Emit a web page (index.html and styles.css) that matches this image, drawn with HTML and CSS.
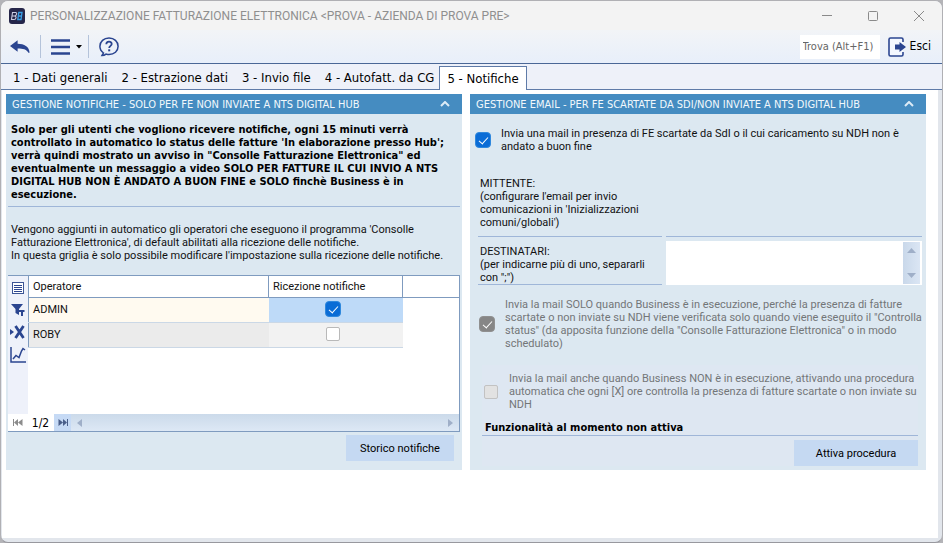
FILE: index.html
```html
<!DOCTYPE html>
<html lang="it">
<head>
<meta charset="utf-8">
<title>Personalizzazione fatturazione elettronica</title>
<link rel="stylesheet" href="styles.css">
</head>
<body>
<div class="window">
  <header class="titlebar">
    <svg class="logo" width="16" height="16" viewBox="0 0 16 16" aria-hidden="true">
      <rect width="16" height="16" rx="3" fill="#262649"/>
      <path d="M3.500 4.500H6.500Q8 4.500 7.600 6.200Q7.300 7.800 5.500 8Q7.300 8.200 7 9.800Q6.700 11.500 5 11.500H2.500ZM3 8H5.500" fill="none" stroke="#c9cbe0" stroke-width="1.100"/>
      <path d="M9.800 4.500H13L12.500 8H9.300ZM9.300 8H12.500L12 11.500H8.800Z" fill="none" stroke="#3aa0e6" stroke-width="1.300"/>
    </svg>
    <h1 class="title">PERSONALIZZAZIONE FATTURAZIONE ELETTRONICA &lt;PROVA - AZIENDA DI PROVA PRE&gt;</h1>
    <div class="controls">
      <button class="control" aria-label="Riduci"><svg width="12" height="12" viewBox="0 0 12 12"><path d="M1 5.500H11"/></svg></button>
      <button class="control" aria-label="Ingrandisci"><svg width="12" height="12" viewBox="0 0 12 12"><rect x="1.500" y="1.500" width="9" height="9" rx="1"/></svg></button>
      <button class="control" aria-label="Chiudi"><svg width="12" height="12" viewBox="0 0 12 12"><path d="M1 1L11 11M11 1L1 11"/></svg></button>
    </div>
  </header>

  <div class="toolbar">
    <button class="tool back" aria-label="Indietro"><svg width="20" height="16" viewBox="0 0 21 16"><path d="M0 7L8 1V4.500C15 4.500 20 7.500 20.500 13.500C20.500 14.500 19.500 14.500 19 13.500C17 10.500 14 9.500 8 9.500V13Z" fill="#2b4590"/></svg></button>
    <span class="divider"></span>
    <button class="tool menu" aria-label="Menu">
      <svg width="19" height="16" viewBox="0 0 19 16"><path d="M0 1.500H19M0 8H19M0 14.500H19" stroke="#2b4590" stroke-width="2.500"/></svg>
      <svg width="6" height="4" viewBox="0 0 6 4"><path d="M0 0H6L3 3.500Z" fill="#000"/></svg>
    </button>
    <span class="divider"></span>
    <button class="tool help" aria-label="Guida"><svg width="20" height="20" viewBox="0 0 20 20"><path d="M3 18.500L4.500 16C2 14.300 0.900 12 0.900 9.300C0.900 4.500 4.800 1 10 1S19.100 4.500 19.100 9.300S15.200 17.500 10 17.500C8.500 17.500 8 17.300 7 17.100C5.500 18.300 4.500 18.500 3 18.500Z" fill="none" stroke="#2b4590" stroke-width="1.500"/><path d="M7.300 7.300C7.300 3.800 12.700 3.900 12.700 7C12.700 9 10.300 8.800 10.200 11" fill="none" stroke="#2b4590" stroke-width="1.800"/><rect x="9.200" y="12.300" width="2" height="2" fill="#2b4590"/></svg></button>
    <input class="search" type="text" placeholder="Trova (Alt+F1)" aria-label="Trova">
    <button class="tool exit">
      <svg width="18" height="20" viewBox="0 0 18 20"><path d="M15 5V2.500Q15 1 13.500 1H2.500Q1 1 1 2.500V17.500Q1 19 2.500 19H13.500Q15 19 15 17.500V15" fill="#f4f8ff" stroke="#2b4590" stroke-width="1.600"/><path d="M7 7.500H11.500V5L18 10L11.500 15V12.500H7Z" fill="#2b4590"/></svg>
      Esci
    </button>
  </div>

  <nav class="tabs" role="tablist">
    <button class="tab" role="tab">1 - Dati generali</button>
    <button class="tab" role="tab">2 - Estrazione dati</button>
    <button class="tab" role="tab">3 - Invio file</button>
    <button class="tab" role="tab">4 - Autofatt. da CG</button>
    <button class="tab active" role="tab" aria-selected="true">5 - Notifiche</button>
  </nav>

  <main class="content">
    <section class="panel">
      <header class="panel-head">
        <h2>GESTIONE NOTIFICHE - SOLO PER FE NON INVIATE A NTS DIGITAL HUB</h2>
        <button class="collapse" aria-label="Comprimi"><svg width="10" height="6" viewBox="0 0 10 6"><path d="M1 5L5 1L9 5"/></svg></button>
      </header>
      <p class="intro">Solo per gli utenti che vogliono ricevere notifiche, ogni 15 minuti verrà<br>controllato in automatico lo status delle fatture 'In elaborazione presso Hub';<br>verrà quindi mostrato un avviso in "Consolle Fatturazione Elettronica" ed<br>eventualmente un messaggio a video SOLO PER FATTURE IL CUI INVIO A NTS<br>DIGITAL HUB NON È ANDATO A BUON FINE e SOLO finchè Business è in<br>esecuzione.</p>
      <p class="note">Vengono aggiunti in automatico gli operatori che eseguono il programma 'Consolle<br>Fatturazione Elettronica', di default abilitati alla ricezione delle notifiche.<br>In questa griglia è solo possibile modificare l'impostazione sulla ricezione delle notifiche.</p>

      <div class="grid">
        <div class="grid-main">
          <div class="grid-tools">
            <button aria-label="Elenco"><svg width="14" height="14" viewBox="0 0 14 14"><rect x="1.500" y="1.500" width="11" height="11" fill="#fff" stroke="#3c5596"/><path d="M3 4.500H11M3 6.500H11M3 8.500H11M3 10.500H11" stroke="#2b4590"/></svg></button>
            <button aria-label="Filtro"><svg width="14" height="14" viewBox="0 0 14 14"><path d="M0 1H12L8 6V12L4.500 10V6ZM8 7H13.500V9H12V13H10V9H8Z" fill="#2b4590"/></svg></button>
            <button aria-label="Rimuovi filtro"><svg width="16" height="14" viewBox="0 0 16 14"><path d="M0 4L4 7L0 10Z" fill="#2b4590"/><path d="M5.500 1L13.500 13M13.500 1L5.500 13" stroke="#2b4590" stroke-width="2.800"/></svg></button>
            <button aria-label="Grafico"><svg width="17" height="16" viewBox="0 0 17 16"><path d="M1 0V15H16" fill="none" stroke="#2b4590" stroke-width="1.500"/><path d="M3 12L6 8.500L9 10.500L11.500 4L13 1.500L15 3" fill="none" stroke="#2b4590" stroke-width="1.500"/></svg></button>
          </div>
          <div class="grid-body">
            <table>
              <colgroup><col class="c-op"><col class="c-ric"><col></colgroup>
              <thead><tr><th>Operatore</th><th>Ricezione notifiche</th><th></th></tr></thead>
              <tbody>
                <tr class="current"><td>ADMIN</td><td class="tick"><input type="checkbox" checked aria-label="Ricezione notifiche ADMIN"></td><td></td></tr>
                <tr class="other"><td>ROBY</td><td class="tick"><input type="checkbox" aria-label="Ricezione notifiche ROBY"></td><td></td></tr>
              </tbody>
            </table>
          </div>
        </div>
        <div class="pager">
          <button class="first" aria-label="Primo"><svg width="10" height="7" viewBox="0 0 10 7"><path d="M0 0H1V7H0ZM1 3.500L5 0V7ZM5 3.500L9.500 0V7Z" fill="#8c8c8c"/></svg></button>
          <span class="count">1/2</span>
          <button class="last" aria-label="Ultimo"><svg width="10" height="7" viewBox="0 0 10 7"><path d="M9 0H10V7H9ZM0.500 0L5 3.500L0.500 7ZM5 0L9 3.500L5 7Z" fill="#4a5f8a"/></svg></button>
          <div class="hscroll">
            <svg width="5" height="8" viewBox="0 0 5 8"><path d="M5 0V8L0 4Z"/></svg>
            <svg width="5" height="8" viewBox="0 0 5 8"><path d="M0 0V8L5 4Z"/></svg>
          </div>
        </div>
      </div>
      <button class="action history">Storico notifiche</button>
    </section>

    <section class="panel">
      <header class="panel-head">
        <h2>GESTIONE EMAIL - PER FE SCARTATE DA SDI/NON INVIATE A NTS DIGITAL HUB</h2>
        <button class="collapse" aria-label="Comprimi"><svg width="10" height="6" viewBox="0 0 10 6"><path d="M1 5L5 1L9 5"/></svg></button>
      </header>
      <label class="option send"><input type="checkbox" checked><span>Invia una mail in presenza di FE scartate da SdI o il cui caricamento su NDH non è<br>andato a buon fine</span></label>
      <div class="fields">
        <div class="caption sender">MITTENTE:<br>(configurare l'email per invio<br>comunicazioni in 'Inizializzazioni<br>comuni/globali')</div>
        <div class="sender-value"></div>
        <label class="caption" for="recipients">DESTINATARI:<br>(per indicarne più di uno, separarli<br>con ";")</label>
        <div class="memo">
          <textarea id="recipients"></textarea>
          <div class="vscroll">
            <svg width="9" height="5" viewBox="0 0 9 5"><path d="M0 5H9L4.500 0Z"/></svg>
            <svg width="9" height="5" viewBox="0 0 9 5"><path d="M0 0H9L4.500 5Z"/></svg>
          </div>
        </div>
      </div>
      <label class="option only"><input type="checkbox" checked disabled><span>Invia la mail SOLO quando Business è in esecuzione, perché la presenza di fatture<br>scartate o non inviate su NDH viene verificata solo quando viene eseguito il "Controlla<br>status" (da apposita funzione della "Consolle Fatturazione Elettronica" o in modo<br>schedulato)</span></label>
      <div class="procedure">
        <label class="option also"><input type="checkbox" disabled><span>Invia la mail anche quando Business NON è in esecuzione, attivando una procedura<br>automatica che ogni [X] ore controlla la presenza di fatture scartate o non inviate su<br>NDH</span></label>
        <p class="inactive">Funzionalità al momento non attiva</p>
        <button class="action activate">Attiva procedura</button>
      </div>
    </section>
  </main>
</div>
</body>
</html>
```
FILE: styles.css
```css
* { box-sizing: border-box; }

html, body { height: 100%; }

body {
  margin: 0;
  background: #b4b4b8;
  color: #111;
  font-family: Roboto, "Liberation Sans", sans-serif;
  font-size: 11px;
  line-height: 13px;
  white-space: nowrap;
}

h1, h2, p { margin: 0; font-weight: normal; }

button {
  margin: 0;
  padding: 0;
  border: 0;
  background: none;
  color: inherit;
  font: inherit;
}

svg { display: block; flex: none; }

.window {
  display: flex;
  flex-direction: column;
  min-height: 100%;
  border: 1px solid #b0b0b4;
  border-bottom-color: #98989e;
  border-radius: 8px;
  background: #e2e6ec;
  padding-bottom: 4px;
  overflow: hidden;
}

/* Title bar */
.titlebar {
  display: flex;
  align-items: center;
  height: 29px;
  padding-left: 8px;
  background: #f3f3f3;
}

.title {
  margin-left: 5px;
  color: #8f8f8f;
  font-size: 12px;
  line-height: 16px;
}

.controls { display: flex; margin-left: auto; }

.control {
  display: flex;
  align-items: center;
  justify-content: center;
  width: 46px;
  height: 29px;
}

.control svg { fill: none; stroke: #8a8a8a; }

/* Toolbar */
.toolbar {
  display: flex;
  align-items: center;
  height: 34px;
  padding: 0 11px 0 9px;
  border-bottom: 1px solid #4a6796;
  background: linear-gradient(#f2f4f7, #e8effa);
}

.toolbar, .tabs, .count, .panel-head, .intro, .inactive {
  font-family: "DejaVu Sans Condensed", "DejaVu Sans", sans-serif;
}

.tool { display: flex; align-items: center; }

.divider {
  width: 1px;
  height: 23px;
  margin: 0 10px;
  background: #b4c3da;
}

.menu { gap: 6px; margin-right: -4px; }

.search {
  width: 80px;
  height: 24px;
  margin-left: auto;
  padding: 0 3px;
  border: 0;
  background: #fff;
  font: inherit;
  font-size: 11px;
}

.search::placeholder { color: #666; opacity: 1; }

.exit {
  gap: 4px;
  margin-left: 8px;
  color: #000;
  font-size: 12px;
}

/* Tabs */
.tabs {
  display: flex;
  align-items: flex-end;
  height: 26px;
  padding-left: 5px;
  border-bottom: 1px solid #5f7ba8;
  background: #eef1f9;
  flex: none;
}

.tab {
  height: 24px;
  padding: 0 7px;
  color: #000;
  font-size: 13px;
}

.tab.active {
  margin: 0 0 -1px -2px;
  border: 1px solid #5f7ba8;
  border-bottom: 0;
  background: #fff;
}

/* Panels */
.content {
  display: flex;
  align-items: flex-start;
  gap: 8px;
  flex: 1;
  margin: 0 4px 0 1px;
  padding: 4px 12px 12px 4px;
  background: #fff;
}

.panel {
  display: flex;
  flex-direction: column;
  flex: 1 1 0;
  min-width: 0;
  min-height: 376px;
  background: #dce8f1;
}

.panel-head {
  display: flex;
  align-items: center;
  justify-content: space-between;
  height: 20px;
  padding: 0 12px 0 6px;
  background: #458cc1;
  color: #f2f8fc;
}

.panel-head h2 { font-size: 11px; }

.collapse svg { fill: none; stroke: #dcebf6; stroke-width: 2; }

.intro {
  margin: 0 2px;
  padding: 9px 3px 5px;
  border-bottom: 1px solid #9fb6d8;
  color: #000;
  font-weight: bold;
}

.note { padding: 16px 5px 13px; }

/* Operators grid */
.grid {
  margin: 0 2px;
  border: 1px solid #7f9bbf;
  border-left: 0;
  background: #fff;
}

.grid-main { display: flex; height: 138px; }

.grid-tools {
  display: flex;
  flex-direction: column;
  align-items: center;
  gap: 8px;
  width: 20px;
  padding-top: 5px;
  background: #eef1fa;
}

.grid-body { flex: 1; }

table {
  width: 100%;
  table-layout: fixed;
  border-collapse: collapse;
}

.c-op { width: 240px; }
.c-ric { width: 134px; }

th {
  height: 21px;
  padding: 0 4px;
  border-bottom: 1px solid #7f9bbf;
  border-left: 1px solid #7f9bbf;
  font-weight: normal;
  text-align: left;
}

td { height: 25px; padding: 0 4px; }

td:first-child {
  border-left: 1px solid #7f9bbf;
  border-bottom: 1px solid #cbd8e6;
}

.tick { padding: 0 6px 2px 0; border-bottom: 1px solid #cbd8e6; }
.current td:first-child { background: #fffaf0; }
.current .tick { background: #bedaf8; }
.other td:first-child { background: #ebebeb; }
.other .tick { background: #f2f2f2; }

.pager { display: flex; height: 17px; }

.pager button {
  display: flex;
  align-items: center;
  justify-content: center;
  width: 19px;
}

.pager .last { width: 17px; background: #c6daf5; }

.count {
  width: 27px;
  color: #000;
  font-size: 12px;
  line-height: 18px;
  text-align: center;
}

.hscroll {
  display: flex;
  align-items: center;
  justify-content: space-between;
  flex: 1;
  padding: 0 6px;
  background: linear-gradient(#cbdaea, #dde8f5);
}

.hscroll svg, .vscroll svg { fill: #9fafc8; }

/* Tick boxes */
input[type="checkbox"] {
  appearance: none;
  display: block;
  flex: none;
  width: 14px;
  height: 14px;
  margin: 1px;
  border: 1px solid #b9b9b9;
  border-radius: 2px;
  background: #fff;
}

input[type="checkbox"]:checked {
  position: relative;
  width: 16px;
  height: 16px;
  margin: 0;
  border: 1px solid #2f88dd;
  border-radius: 4px;
  background: #0a6cd6;
}

.tick input[type="checkbox"] { margin: 0 auto; }

input[type="checkbox"]:checked::after {
  content: "";
  position: absolute;
  left: 5px;
  top: 2px;
  width: 4px;
  height: 8px;
  border: solid #fff;
  border-width: 0 1px 1px 0;
  transform: rotate(42deg);
}

input[type="checkbox"]:disabled { background: #e2e2e2; border-color: #c2c2c2; }
input[type="checkbox"]:checked:disabled { background: #868686; border-color: #909090; }

.action {
  height: 26px;
  background: #c5d9f2;
  color: #000;
}

.history { width: 108px; margin: 3px 8px 0 auto; }

/* Email panel */
.option { display: flex; align-items: center; }

.send { gap: 10px; padding: 13px 5px 0; }

.fields {
  display: grid;
  grid-template-columns: 184px 1fr;
  column-gap: 4px;
  margin: 24px 4px 0 8px;
}

.caption { padding: 0 2px; border-bottom: 1px solid #9fb6d8; }
.sender { padding-bottom: 7px; }
.sender-value { border-bottom: 1px solid #9fb6d8; }
label.caption { padding-top: 8px; }

.memo {
  display: flex;
  height: 44px;
  margin-top: 4px;
  padding: 1px 2px 1px 0;
  background: #fff;
}

.memo textarea {
  flex: 1;
  min-width: 0;
  padding: 2px;
  border: 0;
  font: inherit;
  resize: none;
}

.vscroll {
  display: flex;
  flex-direction: column;
  align-items: center;
  justify-content: space-between;
  width: 17px;
  padding: 6px 0;
  background: linear-gradient(90deg, #c9d8ea, #dbe6f4);
}

.only { gap: 10px; padding: 13px 9px 0; color: #737678; }

.procedure {
  display: flex;
  flex-direction: column;
  margin: 15px 8px 0 12px;
  padding-top: 7px;
  background: #dee7f2;
}

.also { gap: 10px; padding: 0 1px; color: #737678; }

.inactive {
  padding: 10px 3px 1px;
  border-bottom: 1px solid #9fb6d8;
  color: #000;
  font-weight: bold;
}

.activate { width: 124px; margin: 4px 0 0 auto; }
```
